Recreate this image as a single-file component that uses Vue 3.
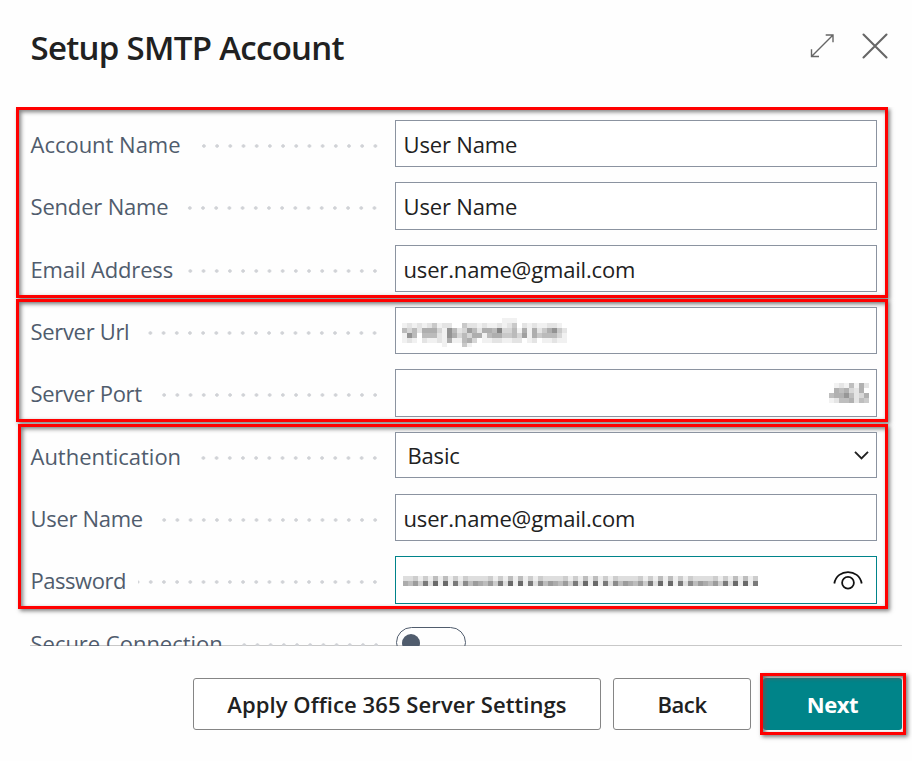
<script setup>
const groups = [
  {
    id: 'identity',
    fields: [
      { label: 'Account Name', type: 'text', value: 'User Name', cls: 'wide' },
      { label: 'Sender Name', type: 'text', value: 'User Name', cls: 'medium' },
      { label: 'Email Address', type: 'text', value: 'user.name@gmail.com', cls: 'medium' },
    ],
  },
  {
    id: 'server',
    fields: [
      { label: 'Server Url', type: 'url', cls: '' },
      { label: 'Server Port', type: 'port', cls: '' },
    ],
  },
  {
    id: 'login',
    fields: [
      { label: 'Authentication', type: 'select', value: 'Basic', cls: 'wide' },
      { label: 'User Name', type: 'text', value: 'user.name@gmail.com', cls: '' },
      { label: 'Password', type: 'password', cls: 'narrow' },
    ],
  },
]

// Each digit is the darkness of one 5px mosaic tile.
const tiles = (rows, strength) =>
  rows.flatMap((row, y) =>
    [...row].map((d, x) => ({ x: x * 5, y: y * 5, o: Number(d) * strength })).filter((t) => t.o > 0)
  )

const urlTiles = tiles([
  '000000000000000000001110000000000',
  '121212412200422121121240212112210',
  '535266631852375266593351616246842',
  '185055521863536615664453716455531',
  '121021121611563011221122012011211',
  '000000001000410000000000000000000',
], 0.053)
const portTiles = tiles(['01215162', '06563260', '56685236', '12556254'], 0.051)
const repeat = (s) => s.repeat(5).slice(0, 71)
const passwordTiles = tiles([repeat('223131414131322'), repeat('546382919182746')], 0.065)
</script>

<template>
  <main class="dialog">
    <header class="header">
      <h1 class="title">Setup SMTP Account</h1>
      <svg class="window-icons" width="80" height="28" viewBox="0 0 80 28" fill="none" stroke="#666">
        <path stroke-width="1.4" d="M3.5 24.5 25 3M17.7 3H25V10.3M3.5 17.2v7.3h7.5" />
        <path stroke-width="2.1" stroke-linecap="round" d="M55.5 2.5 78.5 25.5M78.5 2.5 55.5 25.5" />
      </svg>
    </header>

    <section class="content">
      <div v-for="g in groups" :key="g.id" class="group" :class="g.id">
        <div v-for="f in g.fields" :key="f.label" class="row">
          <span class="label" :class="f.cls">{{ f.label }}</span>
          <span class="dots"></span>
          <div class="input" :class="f.type">
            <span v-if="f.value" class="value">{{ f.value }}</span>
            <svg v-if="f.type === 'url'" class="mosaic" width="165" height="29">
              <rect v-for="(t, i) in urlTiles" :key="i" :x="t.x" :y="t.y" width="5" height="5" :fill-opacity="t.o" />
            </svg>
            <svg v-if="f.type === 'port'" class="mosaic" width="40" height="20">
              <rect v-for="(t, i) in portTiles" :key="i" :x="t.x" :y="t.y" width="5" height="5" :fill-opacity="t.o" />
            </svg>
            <svg v-if="f.type === 'select'" class="chevron" width="15" height="10" fill="none" stroke="#212121" stroke-width="1.9">
              <path d="M1 1.8 7.5 8.3 14 1.8" />
            </svg>
            <template v-if="f.type === 'password'">
              <svg class="mosaic" width="355" height="10">
                <rect v-for="(t, i) in passwordTiles" :key="i" :x="t.x" :y="t.y" width="5" height="5" :fill-opacity="t.o" />
              </svg>
              <svg class="eye" width="30" height="20" fill="none" stroke="#111" stroke-width="1.8">
                <path d="M1.3 12.5C4-2.8 26-2.8 28.7 12.5" />
                <circle cx="15" cy="11.8" r="5.9" />
              </svg>
            </template>
          </div>
        </div>
      </div>
      <div class="row last">
        <span class="label wide">Secure Connection</span>
        <span class="dots"></span>
        <div class="switch-cell"><span class="switch"><i class="knob"></i></span></div>
      </div>
    </section>

    <footer class="footer">
      <button class="btn apply"><span>Apply Office 365 Server Settings</span></button>
      <button class="btn back"><span>Back</span></button>
      <div class="highlight"><button class="btn next"><span>Next</span></button></div>
    </footer>
  </main>
</template>

<style>
body { background: #fff; overflow: hidden; }
</style>

<style scoped>
.dialog {
  box-sizing: border-box;
  width: 912px;
  height: 761px;
  display: flex;
  flex-direction: column;
  background: #fefefe;
  font-family: "Open Sans", "Noto Sans", sans-serif;
  font-size: 22px;
  color: #212121;
}
.header {
  box-sizing: border-box;
  height: 107px;
  padding: 25px 24px 0 30.5px;
  display: flex;
  justify-content: space-between;
  align-items: flex-start;
}
.title {
  margin: 0;
  font-size: 33px;
  line-height: 46px;
  font-weight: 600;
  letter-spacing: -0.7px;
  white-space: nowrap;
}
.window-icons { margin-top: 7px; }
.content {
  box-sizing: border-box;
  height: 539px;
  margin: 0 10px 0 0;
  overflow: hidden;
  display: flex;
  flex-direction: column;
  background: linear-gradient(#c8c8c8, #c8c8c8) 30px 100% / 100% 1px no-repeat;
}
.group {
  box-sizing: border-box;
  flex: none;
  width: 872px;
  margin-left: 16px;
  border: 3px solid #f00;
  padding: 5px 8px 2px 11.5px;
  display: grid;
  row-gap: 15px;
  box-shadow: 2px 2px 4px rgba(0, 0, 0, 0.5), inset 2px 2px 4px rgba(0, 0, 0, 0.5);
}
.identity { padding-top: 10px; padding-bottom: 3px; grid-template-rows: 47px 48px 47px; }
.server { margin-top: 1px; grid-template-rows: 47px 48px; }
.login {
  margin: 2px 0 0 18px;
  width: 870px;
  padding-left: 9.5px;
  grid-template-rows: 47px 47px 48px;
}
.row { display: flex; align-items: stretch; min-width: 0; }
.label {
  flex: none;
  align-self: flex-start;
  line-height: 30px;
  padding-top: 9px;
  color: #505c6d;
  white-space: nowrap;
  letter-spacing: -0.32px;
}
.label.wide { letter-spacing: -0.02px; }
.label.medium { letter-spacing: -0.18px; }
.label.narrow { letter-spacing: -0.46px; }
.dots {
  flex: 1;
  margin: 0 13.5px 0 12px;
  background: radial-gradient(circle at 50% 50%, #d0d2d6 1.4px, transparent 2.1px) 100% 21.5px / 13.2px 8px repeat-x;
}
.input {
  box-sizing: border-box;
  flex: none;
  width: 482px;
  border: 1px solid #8b93a0;
  padding: 0 7px 0 7.5px;
  display: flex;
  align-items: center;
  background: #fff;
}
.value { letter-spacing: -0.16px; line-height: 30px; }
.select { height: 46px; padding: 0 7px 0 11.5px; justify-content: space-between; }
.url { padding-top: 4px; padding-left: 6px; }
.port { justify-content: flex-end; padding-right: 7px; padding-top: 0; }
.password { border-color: #00838a; padding: 2px 13px 0 7px; justify-content: space-between; }
.mosaic { shape-rendering: crispEdges; }
.last { flex: none; height: 47px; margin: 10px 25px 0 30.5px; }
.switch-cell { width: 481px; display: flex; align-items: center; }
.switch {
  box-sizing: border-box;
  width: 70px;
  height: 31px;
  border: 1px solid #505c6d;
  border-radius: 16px;
  padding-left: 5px;
  display: flex;
  align-items: center;
}
.knob { width: 18px; height: 18px; border-radius: 50%; background: #505c6d; }
.footer {
  display: flex;
  justify-content: flex-end;
  align-items: flex-start;
  padding: 27px 6px 0 0;
}
.btn {
  box-sizing: border-box;
  height: 52px;
  margin: 5px 0 0;
  padding: 0;
  border: 1px solid #858585;
  border-radius: 3px;
  background: #fff;
  color: #212121;
  font: 600 22px/30px "Open Sans", "Noto Sans", sans-serif;
  letter-spacing: -0.4px;
  white-space: nowrap;
}
.apply { width: 408px; margin-right: 12px; letter-spacing: 0.08px; }
.back { width: 138px; margin-right: 9px; }
.highlight {
  box-sizing: border-box;
  position: relative;
  width: 146px;
  height: 62px;
  border: 3px solid #f00;
  padding: 2px 1px 2px 0;
  box-shadow: 2px 2px 4px rgba(0, 0, 0, 0.5);
}
.highlight::after {
  content: "";
  position: absolute;
  inset: 0;
  box-shadow: inset 2px 2px 4px rgba(90, 90, 90, 0.9);
}
.next { width: 139px; margin: 0; border: 0; background: #008489; color: #fff; font-weight: 700; }
</style>
